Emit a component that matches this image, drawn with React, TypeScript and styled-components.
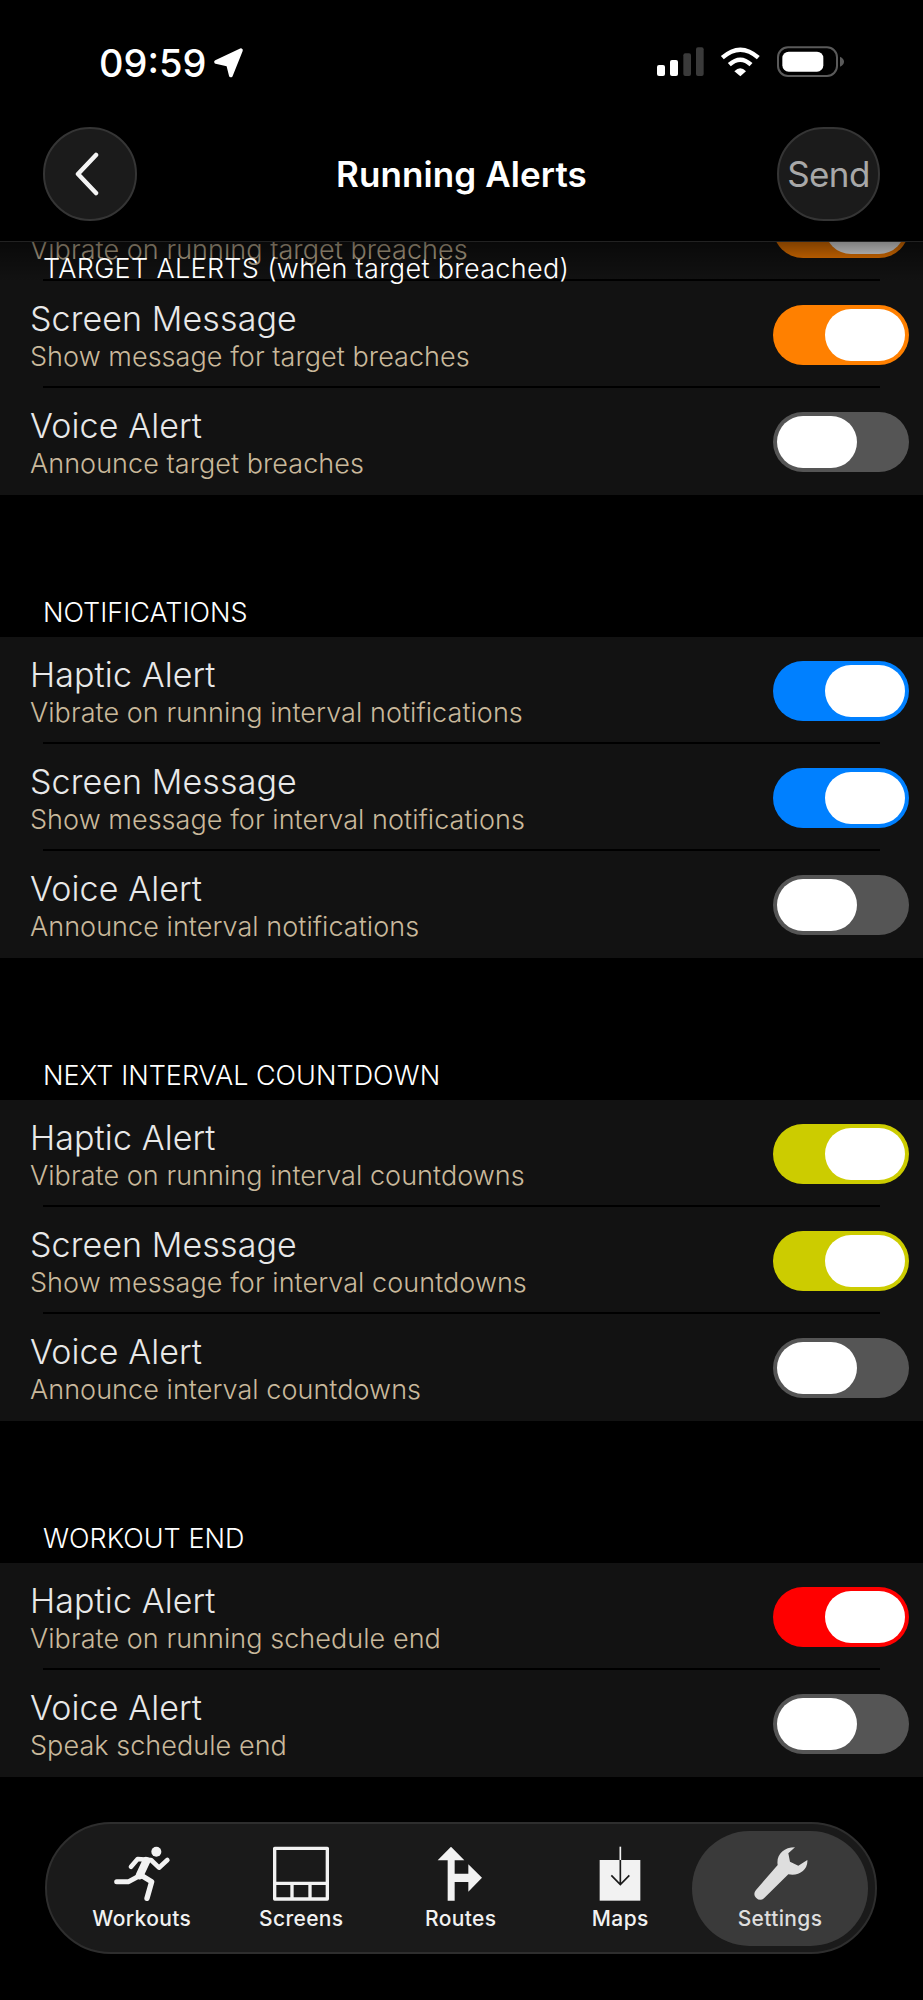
import React from "react";
import styled, { createGlobalStyle } from "styled-components";

const GlobalStyle = createGlobalStyle`
  html, body {
    margin: 0;
    padding: 0;
    background: #000;
    font-family: Inter, "Noto Sans", "Liberation Sans", sans-serif;
  }
`;

const Screen = styled.div`
  position: relative;
  width: 923px;
  height: 2000px;
  display: flex;
  flex-direction: column;
  overflow: hidden;
  background: #000;
  color: #fff;
`;

const Header = styled.header`
  flex: none;
  height: 242px;
  box-sizing: border-box;
  border-bottom: 1px solid #222;
`;

const StatusBar = styled.div`
  height: 127px;
  box-sizing: border-box;
  padding: 45px 78px 0 99px;
  display: flex;
  justify-content: space-between;
  align-items: flex-start;
`;

const Clock = styled.div`
  display: flex;
  align-items: center;
  gap: 7px;
  font-size: 38px;
  font-weight: 500;
  line-height: 36px;
`;

const NavRow = styled.div`
  display: grid;
  grid-template-columns: 1fr auto 1fr;
  align-items: center;
  padding: 0 43px;
`;

const BackButton = styled.button`
  justify-self: start;
  width: 94px;
  height: 94px;
  padding: 0 6px 0 0;
  display: flex;
  align-items: center;
  justify-content: center;
  border-radius: 50%;
  background: #1b1b1b;
  border: 2px solid #353535;
`;

const SendButton = styled.button`
  justify-self: end;
  width: 103px;
  height: 94px;
  padding: 0;
  border-radius: 47px;
  background: #1b1b1b;
  border: 2px solid #353535;
  color: #a8a8a8;
  font-family: inherit;
  font-size: 35px;
  font-weight: 400;
  letter-spacing: -0.6px;
`;

const Title = styled.h1`
  margin: 0;
  font-size: 35px;
  font-weight: 600;
  letter-spacing: 0.1px;
  color: #fff;
`;

const Scroller = styled.main`
  position: relative;
  flex: 1;
  overflow: hidden;
`;

const ScrollContent = styled.div<{ $offset: number }>`
  margin-top: ${(p) => -p.$offset}px;
`;

const PinnedLabel = styled.div`
  position: absolute;
  top: 0;
  left: 0;
  right: 0;
  height: 40px;
  box-sizing: border-box;
  padding: 11px 0 0 43px;
  font-size: 27px;
  font-weight: 300;
  line-height: 32px;
  letter-spacing: 0.33px;
  color: #fff;
  background: linear-gradient(rgba(0, 0, 0, 0.5), rgba(0, 0, 0, 0));
`;

const SectionLabel = styled.div`
  padding: 102px 0 8px 43px;
  font-size: 27px;
  font-weight: 300;
  line-height: 32px;
  color: #fff;
`;

const Card = styled.div`
  background: #121212;
  padding-bottom: 2px;
`;

const Row = styled.div`
  height: 105px;
  box-sizing: border-box;
  padding: 2px 14px 0 30px;
  display: flex;
  align-items: center;
  justify-content: space-between;
`;

const RowText = styled.div`
  display: flex;
  flex-direction: column;
  gap: 2px;
  padding-top: 2px;
`;

const RowTitle = styled.div`
  font-size: 34px;
  font-weight: 300;
  line-height: 40px;
  letter-spacing: 0.1px;
  color: #e8e8e8;
`;

const RowSub = styled.div`
  font-size: 27px;
  font-weight: 300;
  line-height: 32px;
  letter-spacing: 0.05px;
  color: #c9b99c;
`;

const Divider = styled.div`
  height: 2px;
  margin: 0 43px;
  background: #000;
`;

const Toggle = styled.div<{ $on: boolean; $color: string }>`
  width: 136px;
  height: 60px;
  box-sizing: border-box;
  padding: 4px;
  flex: none;
  display: flex;
  justify-content: ${(p) => (p.$on ? "flex-end" : "flex-start")};
  border-radius: 30px;
  background: ${(p) => (p.$on ? p.$color : "#555")};
`;

const Knob = styled.div`
  width: 80px;
  height: 52px;
  border-radius: 26px;
  background: #fff;
`;

const TabBar = styled.nav`
  position: absolute;
  left: 45px;
  top: 1822px;
  width: 832px;
  height: 132px;
  box-sizing: border-box;
  display: flex;
  align-items: center;
  justify-content: center;
  border-radius: 66px;
  background: #1a1a1a;
  border: 2px solid #2e2e2e;
`;

const Tab = styled.div<{ $active?: boolean }>`
  width: ${(p) => (p.$active ? "176px" : "159.5px")};
  height: 115px;
  margin: ${(p) => (p.$active ? "0 -8px" : "0")};
  padding-top: 14px;
  box-sizing: border-box;
  display: flex;
  flex-direction: column;
  align-items: center;
  border-radius: 58px;
  background: ${(p) => (p.$active ? "#3a3a3a" : "transparent")};
  color: ${(p) => (p.$active ? "#dedede" : "#f2f2f2")};
`;

const TabIcon = styled.svg`
  width: 70px;
  height: 56px;
  display: block;
`;

const TabLabel = styled.div`
  margin-top: 5px;
  font-size: 21px;
  font-weight: 500;
  line-height: 26px;
  letter-spacing: 0.35px;
`;

const LocationArrow = () => (
  <svg width="32" height="34" viewBox="405 50 95 100">
    <path
      d="M488 62 L414 97 L450 105 L458 137 Z"
      fill="#fff"
      stroke="#fff"
      strokeWidth="11"
      strokeLinejoin="round"
    />
  </svg>
);

const StatusIcons = () => (
  <svg width="190" height="34" viewBox="70 45 570 102">
    <rect x="76" y="105" width="24" height="33" rx="6" fill="#fff" />
    <rect x="115" y="90" width="24" height="48" rx="6" fill="#fff" />
    <rect x="155" y="70" width="23" height="68" rx="6" fill="#3a3a3a" />
    <rect x="193" y="52" width="23" height="86" rx="6" fill="#3a3a3a" />
    <g fill="none" stroke="#fff" strokeWidth="13">
      <path d="M272 83 Q326 35 380 83" />
      <path d="M293 104 Q326 74 358 104" />
    </g>
    <path d="M308 124 Q326 106 343 124 L326 139 Z" fill="#fff" />
    <rect x="439" y="52" width="177" height="86" rx="30" fill="none" stroke="#5a5a5a" strokeWidth="6" />
    <rect x="452" y="65" width="123" height="60" rx="19" fill="#fff" />
    <path d="M625 80 Q637 86 637 95 Q637 104 625 110 Z" fill="#5a5a5a" />
  </svg>
);

const RunnerIcon = () => (
  <TabIcon viewBox="140 45 210 168">
    <circle cx="288" cy="65" r="15" fill="currentColor" />
    <g fill="none" stroke="currentColor" strokeLinecap="round" strokeLinejoin="round">
      <path d="M212 110 L232 87 L272 90 L296 113 L321 90" strokeWidth="14" />
      <path d="M258 93 L238 136" strokeWidth="24" />
      <path d="M240 136 L205 155 L169 155" strokeWidth="15" />
      <path d="M240 134 L274 155 L260 205" strokeWidth="16" />
    </g>
  </TabIcon>
);

const ScreensIcon = () => (
  <TabIcon viewBox="619 45 210 168">
    <g fill="none" stroke="currentColor" strokeWidth="10" strokeLinejoin="round">
      <rect x="645" y="55" width="158" height="152" />
      <path d="M645 160 H803 M697 160 V207 M751 160 V207" />
    </g>
  </TabIcon>
);

const RoutesIcon = () => (
  <TabIcon viewBox="85 45 210 168">
    <path
      d="M160 50 L200 91 L171 91 L171 131 L212 131 L212 103 L253 143 L212 185 L212 156 L171 156 L171 212 L150 212 L150 91 L120 91 Z"
      fill="currentColor"
    />
  </TabIcon>
);

const MapsIcon = () => (
  <TabIcon viewBox="559 45 210 168">
    <rect x="603" y="90" width="122" height="122" fill="currentColor" />
    <path d="M665 50 V90" stroke="currentColor" strokeWidth="5" />
    <path d="M665 90 V164 M638 136 L665 164 L692 136" fill="none" stroke="#1a1a1a" strokeWidth="5" />
  </TabIcon>
);

const WrenchIcon = () => (
  <TabIcon viewBox="1035 45 210 168">
    <path
      d="M1185 52 C1150 52 1128 75 1133 105 L1068 180 Q1058 192 1068 203 Q1080 215 1092 205 L1165 133 C1195 140 1225 120 1222 90 L1195 107 L1170 95 L1165 70 Z"
      fill="currentColor"
    />
  </TabIcon>
);

type AlertRow = { title: string; sub: string; on: boolean };
type AlertSection = { label: string; color: string; rows: AlertRow[] };

const sections: AlertSection[] = [
  {
    label: "TARGET ALERTS (when target breached)",
    color: "#ff8000",
    rows: [
      { title: "Haptic Alert", sub: "Vibrate on running target breaches", on: true },
      { title: "Screen Message", sub: "Show message for target breaches", on: true },
      { title: "Voice Alert", sub: "Announce target breaches", on: false },
    ],
  },
  {
    label: "NOTIFICATIONS",
    color: "#0080ff",
    rows: [
      { title: "Haptic Alert", sub: "Vibrate on running interval notifications", on: true },
      { title: "Screen Message", sub: "Show message for interval notifications", on: true },
      { title: "Voice Alert", sub: "Announce interval notifications", on: false },
    ],
  },
  {
    label: "NEXT INTERVAL COUNTDOWN",
    color: "#cccc00",
    rows: [
      { title: "Haptic Alert", sub: "Vibrate on running interval countdowns", on: true },
      { title: "Screen Message", sub: "Show message for interval countdowns", on: true },
      { title: "Voice Alert", sub: "Announce interval countdowns", on: false },
    ],
  },
  {
    label: "WORKOUT END",
    color: "#ff0000",
    rows: [
      { title: "Haptic Alert", sub: "Vibrate on running schedule end", on: true },
      { title: "Voice Alert", sub: "Speak schedule end", on: false },
    ],
  },
];

const tabs = [
  { label: "Workouts", icon: <RunnerIcon /> },
  { label: "Screens", icon: <ScreensIcon /> },
  { label: "Routes", icon: <RoutesIcon /> },
  { label: "Maps", icon: <MapsIcon /> },
  { label: "Settings", icon: <WrenchIcon />, active: true },
];

const App = () => {
  return (
    <Screen>
      <GlobalStyle />
      <Header>
        <StatusBar>
          <Clock>
            09:59
            <LocationArrow />
          </Clock>
          <StatusIcons />
        </StatusBar>
        <NavRow>
          <BackButton aria-label="Back">
            <svg width="28" height="44" viewBox="0 0 28 44">
              <path
                d="M23 3 L5 22 L23 41"
                fill="none"
                stroke="#f4f4f4"
                strokeWidth="4.5"
                strokeLinecap="round"
                strokeLinejoin="round"
              />
            </svg>
          </BackButton>
          <Title>Running Alerts</Title>
          <SendButton>Send</SendButton>
        </NavRow>
      </Header>

      <Scroller>
        <ScrollContent $offset={68}>
          {sections.map((section, i) => (
            <section key={section.label}>
              {i > 0 && <SectionLabel>{section.label}</SectionLabel>}
              <Card>
                {section.rows.map((row, j) => (
                  <React.Fragment key={row.title}>
                    {j > 0 && <Divider />}
                    <Row>
                      <RowText>
                        <RowTitle>{row.title}</RowTitle>
                        <RowSub>{row.sub}</RowSub>
                      </RowText>
                      <Toggle $on={row.on} $color={section.color}>
                        <Knob />
                      </Toggle>
                    </Row>
                  </React.Fragment>
                ))}
              </Card>
            </section>
          ))}
        </ScrollContent>
        <PinnedLabel>{sections[0].label}</PinnedLabel>
      </Scroller>

      <TabBar>
        {tabs.map((tab) => (
          <Tab key={tab.label} $active={tab.active}>
            {tab.icon}
            <TabLabel>{tab.label}</TabLabel>
          </Tab>
        ))}
      </TabBar>
    </Screen>
  );
};

export default App;
